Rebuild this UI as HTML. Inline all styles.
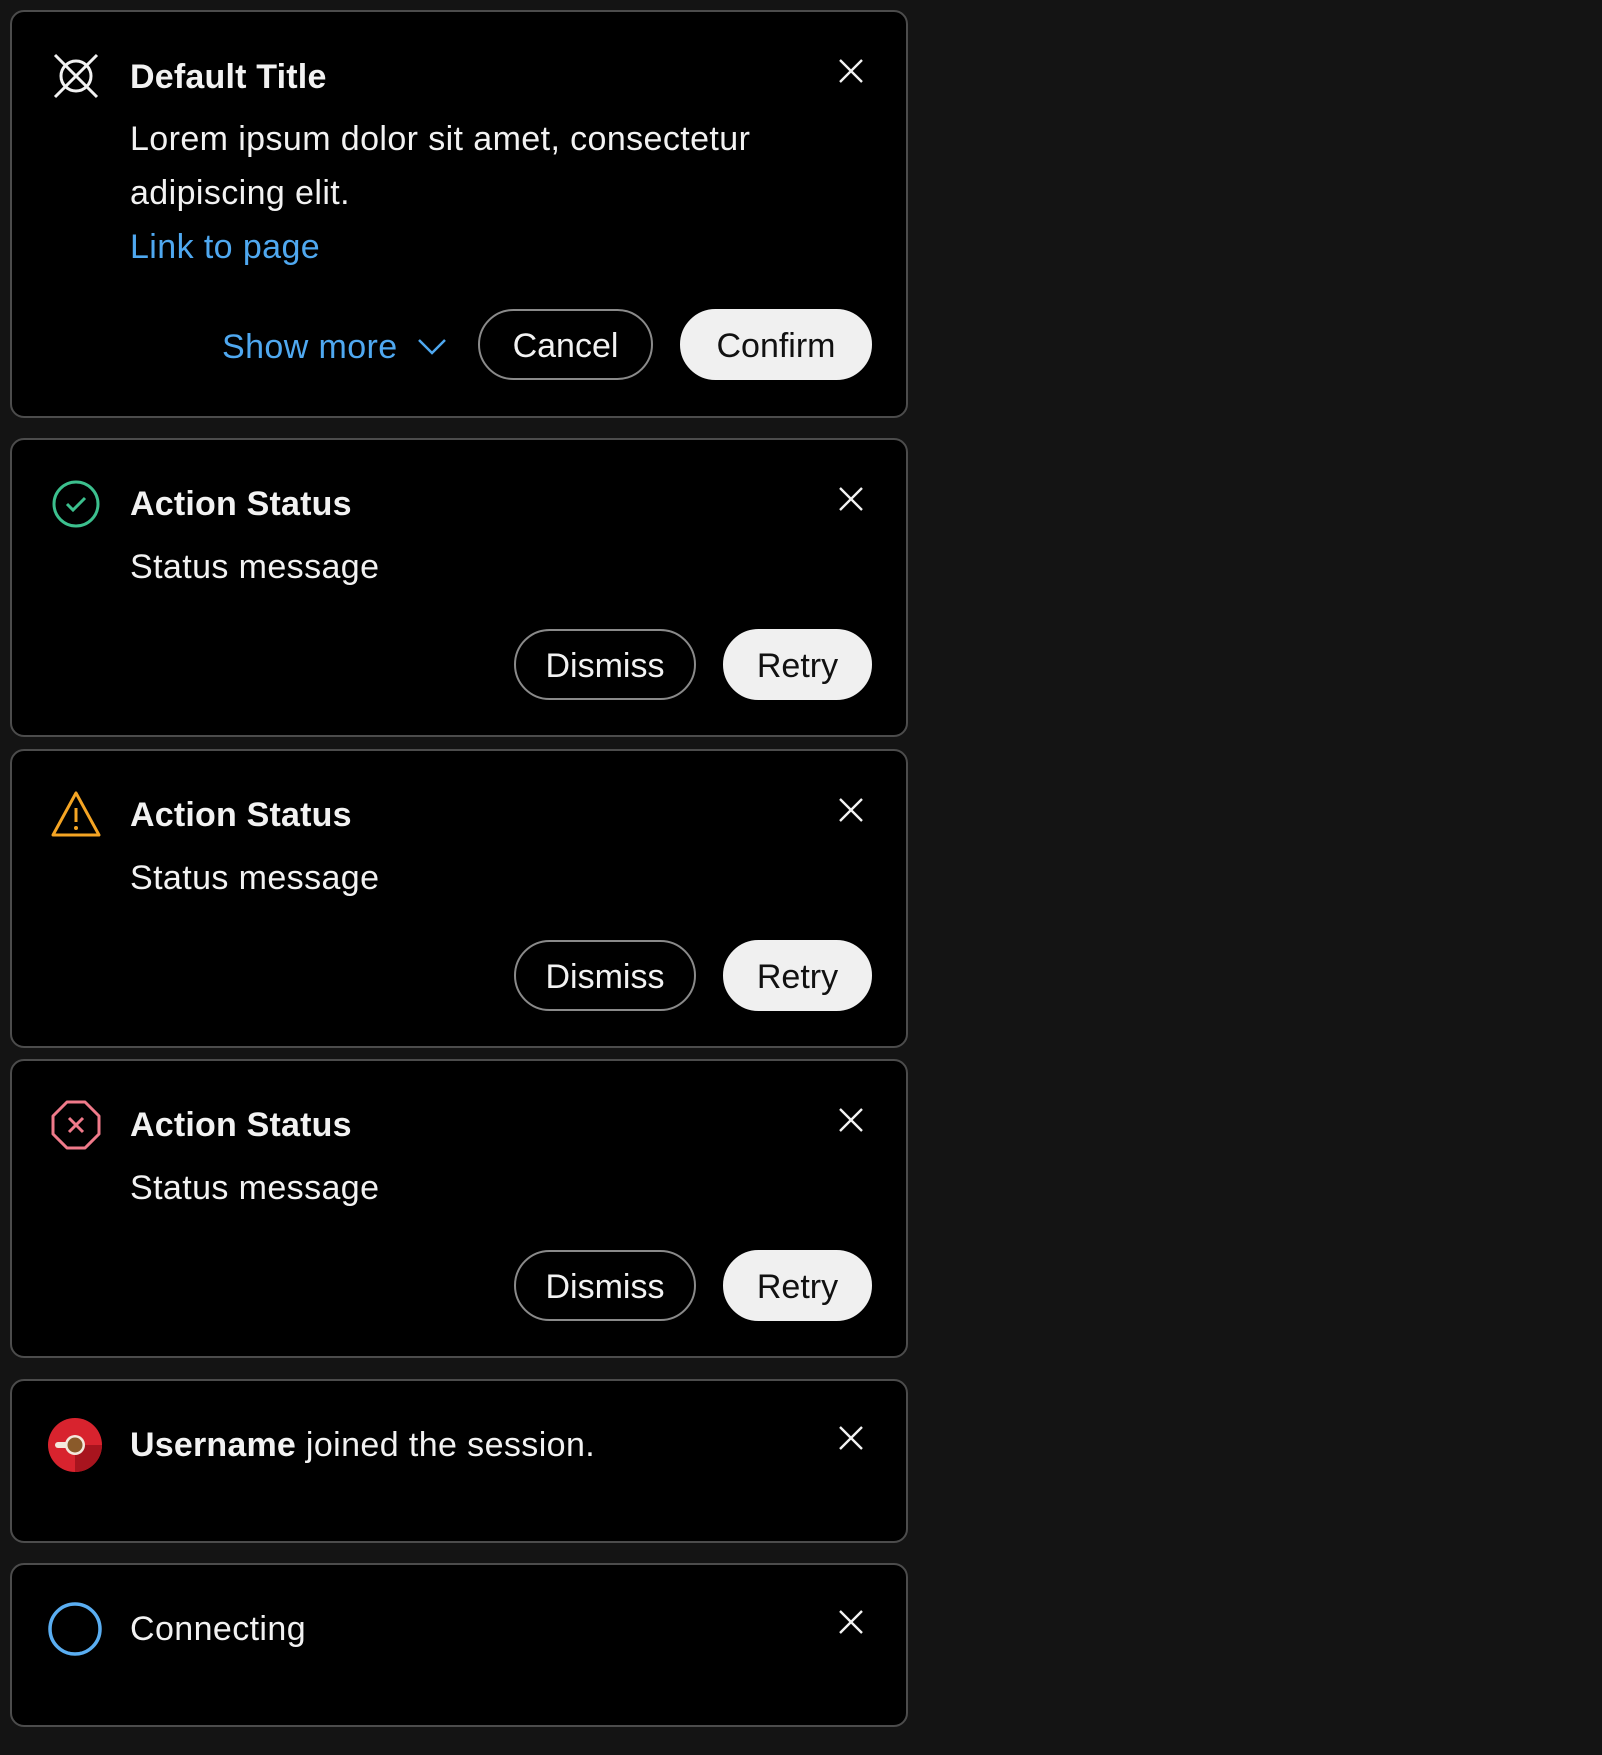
<!DOCTYPE html>
<html><head><meta charset="utf-8"><style>
*{box-sizing:border-box;margin:0;padding:0}
body{width:1602px;height:1755px;background:#141414;font-family:"Liberation Sans",sans-serif;color:#f2f2f2;position:relative;overflow:hidden}
.card{position:absolute;left:10px;width:898px;background:#000;border:2px solid #4c4c4c;border-radius:14px}
.ic{position:absolute;left:38px;width:52px;height:52px}
.t{position:absolute;left:118px;font-size:34px;line-height:40px;white-space:nowrap;letter-spacing:0.4px}
.b{font-weight:bold;letter-spacing:0.2px}
.x{position:absolute;left:826px;width:26px;height:26px}
.btn{position:absolute;height:71px;border-radius:36px;font-size:34px;line-height:70px;text-align:center}
.o{border:2px solid #8a8a8a;color:#f2f2f2}
.f{background:#f0f0f0;color:#111;border:2px solid #f0f0f0}
</style></head><body>
<svg width="0" height="0" style="position:absolute"><defs>
<g id="xx"><path d="M2 2L24 24M24 2L2 24" stroke="#f2f2f2" stroke-width="2.4" fill="none"/></g></defs></svg>

<div class="card" style="top:10px;height:408px">
 <svg class="ic" style="top:38px" viewBox="0 0 52 52"><circle cx="26" cy="26" r="15" stroke="#f2f2f2" stroke-width="3" fill="none"/><path d="M5 5L47 47M47 5L5 47" stroke="#f2f2f2" stroke-width="3"/></svg>
 <div class="t b" style="top:45px">Default Title</div>
 <div class="t" style="top:107px">Lorem ipsum dolor sit amet, consectetur</div>
 <div class="t" style="top:161px">adipiscing elit.</div>
 <div class="t" style="top:215px;color:#4fa8f0">Link to page</div>
 <svg class="x" style="top:46px" viewBox="0 0 26 26"><use href="#xx"/></svg>
 <div class="t" style="left:210px;top:315px;color:#4fa8f0">Show more</div>
 <svg style="position:absolute;left:405px;top:325px" width="30" height="20" viewBox="0 0 30 20"><path d="M2 3L15 16L28 3" stroke="#4fa8f0" stroke-width="2.5" fill="none"/></svg>
 <div class="btn o" style="left:466px;top:297px;width:175px">Cancel</div>
 <div class="btn f" style="left:668px;top:297px;width:192px">Confirm</div>
</div>

<div class="card" style="top:438px;height:299px">
 <svg class="ic" style="top:38px" viewBox="0 0 52 52"><circle cx="26" cy="26" r="22" stroke="#3cc08e" stroke-width="3" fill="none"/><path d="M17 26L23 32L35 20" stroke="#3cc08e" stroke-width="3" fill="none"/></svg>
 <div class="t b" style="top:44px">Action Status</div>
 <div class="t" style="top:107px">Status message</div>
 <svg class="x" style="top:46px" viewBox="0 0 26 26"><use href="#xx"/></svg>
 <div class="btn o" style="left:502px;top:189px;width:182px">Dismiss</div>
 <div class="btn f" style="left:711px;top:189px;width:149px">Retry</div>
</div>

<div class="card" style="top:749px;height:299px">
 <svg class="ic" style="top:38px" viewBox="0 0 52 52"><path d="M26 4L49 46H3Z" stroke="#f5a524" stroke-width="3" fill="none" stroke-linejoin="round"/><path d="M26 19V33" stroke="#f5a524" stroke-width="3"/><circle cx="26" cy="39" r="2" fill="#f5a524"/></svg>
 <div class="t b" style="top:44px">Action Status</div>
 <div class="t" style="top:107px">Status message</div>
 <svg class="x" style="top:46px" viewBox="0 0 26 26"><use href="#xx"/></svg>
 <div class="btn o" style="left:502px;top:189px;width:182px">Dismiss</div>
 <div class="btn f" style="left:711px;top:189px;width:149px">Retry</div>
</div>

<div class="card" style="top:1059px;height:299px">
 <svg class="ic" style="top:38px" viewBox="0 0 52 52"><path d="M17 3H35L49 17V35L35 49H17L3 35V17Z" stroke="#f07a8a" stroke-width="3" fill="none" stroke-linejoin="round"/><path d="M19 19L33 33M33 19L19 33" stroke="#f07a8a" stroke-width="3"/></svg>
 <div class="t b" style="top:44px">Action Status</div>
 <div class="t" style="top:107px">Status message</div>
 <svg class="x" style="top:46px" viewBox="0 0 26 26"><use href="#xx"/></svg>
 <div class="btn o" style="left:502px;top:189px;width:182px">Dismiss</div>
 <div class="btn f" style="left:711px;top:189px;width:149px">Retry</div>
</div>

<div class="card" style="top:1379px;height:164px">
 <svg class="ic" style="top:36px;left:35px;width:56px;height:56px" viewBox="0 0 56 56"><circle cx="28" cy="28" r="27" fill="#d8232e"/><path d="M28 28L55 28A27 27 0 0 1 28 55Z" fill="#a8141e"/><rect x="8" y="25" width="14" height="6" rx="3" fill="#f4e8dc"/><circle cx="28" cy="28" r="10" fill="#f4e8dc"/><circle cx="28" cy="28" r="7.5" fill="#8a5a2a"/></svg>
 <div class="t" style="top:44px"><span class="b">Username</span> joined the session.</div>
 <svg class="x" style="top:44px" viewBox="0 0 26 26"><use href="#xx"/></svg>
</div>

<div class="card" style="top:1563px;height:164px">
 <svg class="ic" style="top:36px;left:35px;width:56px;height:56px" viewBox="0 0 56 56"><circle cx="28" cy="28" r="25" stroke="#5aaef2" stroke-width="3.5" fill="none"/></svg>
 <div class="t" style="top:44px">Connecting</div>
 <svg class="x" style="top:44px" viewBox="0 0 26 26"><use href="#xx"/></svg>
</div>
</body></html>
